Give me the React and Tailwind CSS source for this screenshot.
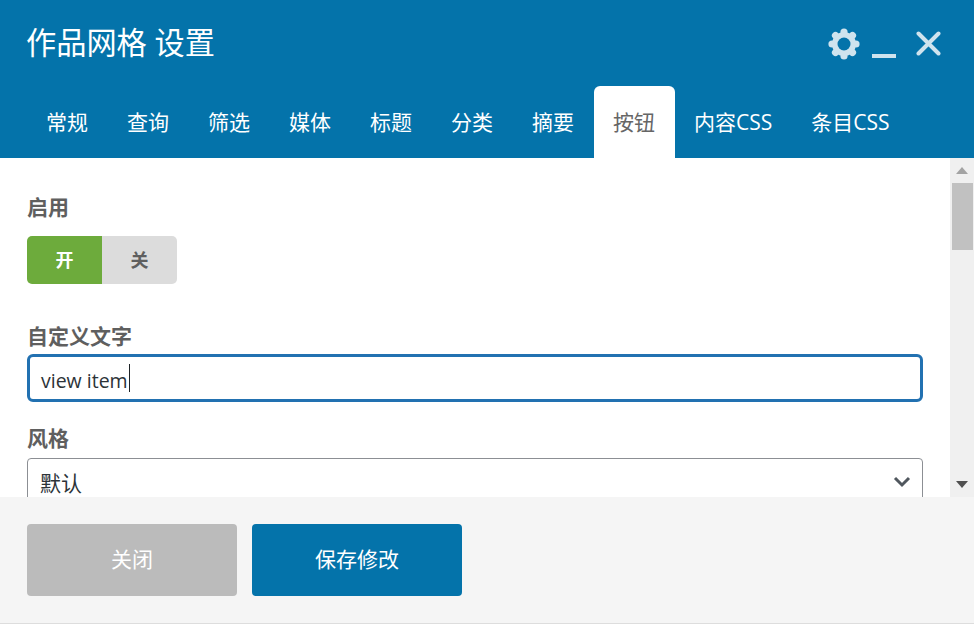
// App.jsx
import React from 'react';

const tabs = ['常规', '查询', '筛选', '媒体', '标题', '分类', '摘要', '按钮', '内容CSS', '条目CSS'];
const activeTab = '按钮';

function GearIcon() {
  const lobes = [0, 45, 90, 135, 180, 225, 270, 315];
  return (
    <svg width="32" height="32" viewBox="0 0 32 32">
      <g fill="#cfe3ee">
        {lobes.map((deg) => (
          <circle key={deg} cx="16" cy="4" r="3.6" transform={`rotate(${deg} 16 16)`} />
        ))}
        <circle cx="16" cy="16" r="12" />
      </g>
      <circle cx="16" cy="16" r="6.5" fill="#0473aa" />
    </svg>
  );
}

function Arrow({ down }) {
  return (
    <svg width="12" height="7" viewBox="0 0 12 7">
      <path d={down ? 'M0 0H12L6 7Z' : 'M0 7H12L6 0Z'} fill={down ? '#505050' : '#a3a3a3'} />
    </svg>
  );
}

export default function App() {
  return (
    <div className="h-[624px] w-[974px] overflow-hidden flex flex-col bg-white font-['Open_Sans','Noto_Sans_CJK_SC',sans-serif]">
      <header className="h-[158px] shrink-0 bg-[#0473aa] flex flex-col justify-between">
        <div className="flex items-start justify-between pt-[20px] pl-[26px] pr-[33px]">
          <h1 className="text-[30.2px] leading-[46px] font-normal text-white">作品网格 设置</h1>
          <div className="flex items-center pt-[7px]">
            <GearIcon />
            <svg className="ml-[12px] mt-[1px]" width="24" height="32" viewBox="0 0 24 32">
              <rect x="0" y="26" width="24" height="4" fill="#cfe3ee" />
            </svg>
            <svg className="ml-[20px]" width="25" height="32" viewBox="0 0 25 32">
              <path d="M2.5 5.5L22.5 25.5M22.5 5.5L2.5 25.5" stroke="#cfe3ee" strokeWidth="4" strokeLinecap="round" />
            </svg>
          </div>
        </div>
        <nav className="flex pl-[27px]">
          {tabs.map((tab) => (
            <div
              key={tab}
              className={
                tab === activeTab
                  ? 'h-[72px] pt-[2px] pl-[19px] pr-[20px] flex items-center justify-center whitespace-nowrap rounded-t-[6px] bg-white text-[21px] text-[#666666]'
                  : 'h-[72px] pt-[2px] pl-[19px] pr-[20px] flex items-center justify-center whitespace-nowrap text-[21px] text-white'
              }
            >
              {tab}
            </div>
          ))}
        </nav>
      </header>

      <div className="h-[339px] shrink-0 flex overflow-hidden">
        <main className="flex-1 min-w-0 pl-[27px] pr-[27px] pt-[34px] overflow-hidden">
          <label className="block text-[21px] leading-[30px] font-bold text-[#5f5f5f]">启用</label>
          <div className="mt-[14px] flex w-[150px] h-[48px] rounded-[5px] overflow-hidden text-[18px] font-bold">
            <div className="w-1/2 pt-[1px] flex items-center justify-center bg-[#6dab3c] text-white">开</div>
            <div className="w-1/2 pt-[1px] flex items-center justify-center bg-[#dcdcdc] text-[#5f5f5f]">关</div>
          </div>

          <label className="block mt-[37px] text-[21px] leading-[30px] font-bold text-[#5f5f5f]">自定义文字</label>
          <div className="mt-[3px] h-[48px] flex items-center rounded-[6px] border-[3px] border-[#2271b1] pl-[11px] text-[19.5px] text-[#2c3338]">
            <span className="mt-[6px]">view item</span>
            <span className="ml-[1px] h-[28px] w-[1px] bg-[#1d2327]" />
          </div>

          <label className="block mt-[21px] text-[21px] leading-[30px] font-bold text-[#5f5f5f]">风格</label>
          <div className="mt-[5px] h-[48px] flex items-center justify-between rounded-[4px] border border-[#8c8f94] pl-[12px] pr-[11px] text-[21px] text-[#2c3338]">
            <span className="mt-[4px]">默认</span>
            <svg width="18" height="12" viewBox="0 0 18 12">
              <path d="M2 2L9 9L16 2" fill="none" stroke="#50575e" strokeWidth="3" />
            </svg>
          </div>
        </main>

        <aside className="w-[24px] shrink-0 flex flex-col bg-[#f0f0f0]">
          <div className="h-[25px] flex items-center justify-center"><Arrow /></div>
          <div className="h-[67px] ml-[2px] mr-[1px] bg-[#c1c1c1]" />
          <div className="flex-1" />
          <div className="h-[25px] flex items-center justify-center"><Arrow down /></div>
        </aside>
      </div>

      <footer className="flex-1 flex gap-[15px] pt-[27px] pl-[27px] bg-[#f5f5f5] border-b border-[#dddddd]">
        <button className="w-[210px] h-[72px] rounded-[4px] bg-[#bbbbbb] text-[21px] text-white">关闭</button>
        <button className="w-[210px] h-[72px] rounded-[4px] bg-[#0473aa] text-[21px] text-white">保存修改</button>
      </footer>
    </div>
  );
}
